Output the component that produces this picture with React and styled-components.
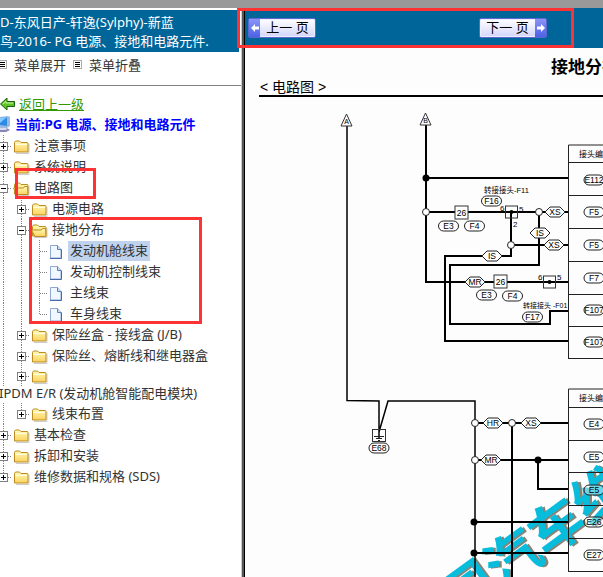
import React, { useState } from "react"
import styled, { createGlobalStyle } from "styled-components"

const GlobalStyle = createGlobalStyle`
  * {
    box-sizing: border-box;
  }
  body {
    margin: 0;
    background: #fff;
    font-family: "Noto Sans", "Noto Sans CJK SC", sans-serif;
    font-size: 13px;
    color: #333;
    overflow: hidden;
  }
`

const Page = styled.div`
  position: relative;
  height: 100vh;
  display: flex;
  flex-direction: column;
  overflow: hidden;
`

const TopStrip = styled.div`
  flex: none;
  height: 8px;
  background: #999;
`

const Frames = styled.div`
  flex: 1;
  min-height: 0;
  display: grid;
  grid-template-columns: minmax(245px, 25%) 1fr;
`

const Sidebar = styled.aside`
  min-width: 0;
  overflow: hidden;
  border-right: 1px solid #000;
  box-shadow: inset -2px 0 #555, inset -3px 0 #ccc;
  padding-right: 3px;
`

const BookTitle = styled.h1`
  margin: 2px 2px 0 0;
  padding: 3px 0 1px;
  background: #069;
  color: #fff;
  font-size: 13px;
  font-weight: 400;
  line-height: 19px;
  white-space: nowrap;
`

const MenuBar = styled.div`
  display: flex;
  gap: 7px;
  height: 34px;
  padding-bottom: 8px;
  border-bottom: 1px solid #808080;
`

const MenuButton = styled.button`
  display: flex;
  align-items: center;
  gap: 7px;
  padding: 0;
  border: 0;
  background: none;
  font: inherit;
  color: inherit;
  cursor: pointer;
  &:first-child {
    margin-left: -2px;
  }
`

const Heading = styled.div`
  display: flex;
  align-items: center;
  gap: 4px;
  height: 20px;
  white-space: nowrap;
`

const Headings = styled.div`
  padding-top: 8px;
`

const BackLink = styled.a`
  color: #390;
  line-height: 18px;
`

const CurrentLink = styled.a`
  padding-bottom: 2px;
  color: #00f;
  font-weight: 700;
  text-decoration: none;
`

const Tree = styled.div`
  margin: 0 0 0 -6px;
  padding-top: 1px;
`

const Row = styled.div`
  display: flex;
  align-items: center;
  height: ${(p) => (p.$short ? 18 : 21)}px;
  white-space: nowrap;
`

const Toggle = styled.button`
  display: flex;
  padding: 0;
  border: 0;
  background: none;
  cursor: pointer;
`

const NodeLink = styled.a`
  margin-left: 2px;
  padding: 0 2px 2px;
  line-height: 18px;
  color: #333;
  text-decoration: none;
  background: ${(p) => (p.$selected ? "#c0d2ec" : "transparent")};
`

const Overflow = styled.a`
  display: block;
  padding-left: 5px;
  line-height: 19px;
  color: #333;
  text-decoration: none;
  white-space: nowrap;
`

const Content = styled.main`
  min-width: 0;
  overflow: hidden;
  background: #fdfdfd;
`

const Pager = styled.nav`
  display: flex;
  align-items: center;
  gap: 163px;
  height: 40px;
  padding: 0 3px;
  background: #069;
`

const PageButton = styled.button`
  display: flex;
  flex-direction: ${(p) => (p.$next ? "row-reverse" : "row")};
  align-items: stretch;
  width: 68px;
  height: 20px;
  padding: 0;
  border: 1px solid #5c66cf;
  border-radius: 2px;
  background: linear-gradient(#fff, #d3d5fb);
  box-shadow: inset 0 0 0 1px #eef;
  color: #000;
  font-family: "Liberation Sans", "Noto Sans CJK SC", sans-serif;
  font-size: 13px;
  line-height: 17px;
  white-space: nowrap;
  cursor: pointer;
`

const PageArrow = styled.span`
  display: flex;
  align-items: center;
  justify-content: center;
  width: 11px;
  background: linear-gradient(#8c95f5, #4b62e8);
`

const PageText = styled.span`
  flex: 1;
  text-align: center;
`

const Sheet = styled.article`
  padding-left: 14px;
  color: #000;
  font-family: "Liberation Sans", "Noto Sans CJK SC", sans-serif;
  white-space: nowrap;
`

const SheetTitle = styled.h2`
  margin: 0;
  padding: 8px 0 0 292px;
  font-size: 17px;
  line-height: 24px;
`

const SheetSection = styled.h3`
  margin: 0;
  padding-left: 1px;
  border-bottom: 2px solid #000;
  font-size: 14px;
  font-weight: 400;
  line-height: 15px;
`

const Diagram = styled.svg`
  display: block;
  font-family: "Liberation Sans", "Noto Sans CJK SC", sans-serif;
`

const Mark = styled.div`
  position: absolute;
  left: ${(p) => p.$x}px;
  top: ${(p) => p.$y}px;
  width: ${(p) => p.$w}px;
  height: ${(p) => p.$h}px;
  border: 3px solid #f33;
  pointer-events: none;
`

const ListIcon = () => (
  <svg width="9" height="9" viewBox="0 0 9 9" shapeRendering="crispEdges">
    <rect x="0.5" y="0.5" width="8" height="8" fill="#fff" stroke="#aaa" />
    <path d="M2 2.5h5M2 4.5h5M2 6.5h5" stroke="#000" />
  </svg>
)

const BackIcon = () => (
  <svg width="15" height="14" viewBox="0 0 15 14">
    <path d="M0.5 7L7 1v3.5h7.500v5H7V13z" fill="#5fc326" stroke="#17600c" />
    <path d="M3 7l3-2.500v1.500h7" fill="none" stroke="#c9f59b" />
  </svg>
)

const ComputerIcon = () => (
  <svg width="11" height="18" viewBox="0 0 11 18">
    <path d="M0 2l8-1 2 1v9l-3 2H0z" fill="#9db9e2" />
    <path d="M0 3l7-1v9l-7-1z" fill="#2d8be6" />
    <path d="M0 3l7-1-7 6z" fill="#83cbff" />
    <path d="M0 13h7l3 2-4 2H0z" fill="#8585b8" />
    <path d="M0 13h6l2 1-3 1H0z" fill="#dadaf2" />
  </svg>
)

const dots = { stroke: "#808080", strokeDasharray: "1 1" }

const GuideLine = () => (
  <svg width="18" height="21" shapeRendering="crispEdges">
    <path d="M9.500 0v21" {...dots} />
  </svg>
)

const JoinLine = ({ last }) => (
  <svg width="18" height="21" shapeRendering="crispEdges">
    <path d={last ? "M9.500 0v11" : "M9.500 0v21"} {...dots} />
    <path d="M10 11.500h8" {...dots} />
  </svg>
)

const ToggleIcon = ({ open, last }) => (
  <svg width="18" height="21" shapeRendering="crispEdges">
    <path d={last ? "M9.500 0v11" : "M9.500 0v21"} {...dots} />
    <path d="M14 11.500h4" {...dots} />
    <rect x="5.500" y="7.500" width="8" height="8" fill="#fff" stroke="#808080" />
    <path d={open ? "M7 11.500h5" : "M7 11.500h5M9.500 9v5"} stroke="#000" />
  </svg>
)

const FolderIcon = ({ open }) => (
  <svg width="18" height="21" viewBox="0 0 18 21">
    <defs>
      <linearGradient id="folder" x1="0" y1="0" x2="0" y2="1">
        <stop offset="0" stopColor="#fffbb8" />
        <stop offset="1" stopColor="#fbd25e" />
      </linearGradient>
    </defs>
    <path d="M4 18.500h13V9" fill="none" stroke="#ccc" />
    <path d="M2.500 17V7.500l1-1.500h4l1.500 1.500h6.500l.500.500v9z" fill="url(#folder)" stroke="#bd8b20" />
    {open ? (
      <path d="M5 17.500L1.500 11h10l1-1.500h3l.500 8z" fill="url(#folder)" stroke="#bd8b20" />
    ) : (
      <path d="M3 9.500h12" stroke="#fffde0" />
    )}
  </svg>
)

const PageIcon = () => (
  <svg width="18" height="21" viewBox="0 0 18 21">
    <path d="M2.500 18V5.500h7l3.500 4V18z" fill="#f1f7ff" stroke="#91a9d4" />
    <path d="M9.500 5.500v4H13" fill="#c5daf8" stroke="#5c82c4" />
    <path d="M2 18.500h11.500V9.500" fill="none" stroke="#466aa8" />
  </svg>
)

const nodes = [
  { depth: 0, text: "注意事项" },
  { depth: 0, text: "系统说明" },
  { depth: 0, text: "电路图", open: true },
  { depth: 1, text: "电源电路" },
  { depth: 1, text: "接地分布", open: true },
  { depth: 2, text: "发动机舱线束", page: true },
  { depth: 2, text: "发动机控制线束", page: true },
  { depth: 2, text: "主线束", page: true },
  { depth: 2, text: "车身线束", page: true, last: true },
  { depth: 1, text: "保险丝盒 - 接线盒 (J/B)" },
  { depth: 1, text: "保险丝、熔断线和继电器盒" },
  { depth: 1, text: "IPDM E/R (发动机舱智能配电模块)", wraps: true },
  { depth: 1, text: "线束布置", last: true },
  { depth: 0, text: "基本检查" },
  { depth: 0, text: "拆卸和安装" },
  { depth: 0, text: "维修数据和规格 (SDS)", last: true },
]

function TreeNode({ node, selected, onSelect }) {
  const select = (e) => {
    e.preventDefault()
    onSelect(node.text)
  }
  return (
    <>
      <Row $short={node.wraps}>
        {Array.from({ length: node.depth }, (_, i) => (
          <GuideLine key={i} />
        ))}
        {node.page ? (
          <JoinLine last={node.last} />
        ) : (
          <Toggle aria-label={node.text} aria-expanded={!!node.open}>
            <ToggleIcon open={node.open} last={node.last} />
          </Toggle>
        )}
        {node.page ? <PageIcon /> : <FolderIcon open={node.open} />}
        {!node.wraps && (
          <NodeLink href="#" $selected={selected} onClick={select}>
            {node.text}
          </NodeLink>
        )}
      </Row>
      {node.wraps && (
        <Overflow href="#" onClick={select}>{node.text}</Overflow>
      )}
    </>
  )
}

const Capsule = ({ x, y, children }) => (
  <g>
    <rect x={x - 10} y={y - 5} width="20" height="10" rx="5" fill="#fff" fillOpacity="0.4" stroke="#222" />
    <text x={x} y={y + 3} fontSize="8.5" textAnchor="middle">{children}</text>
  </g>
)

const Hex = ({ x, y, children }) => (
  <g>
    <path
      d={`M${x - 10} ${y}l5-5h10l5 5l-5 5h-10z`}
      fill="#fff"
      stroke="#222"
    />
    <text x={x} y={y + 3} fontSize="8.5" textAnchor="middle">{children}</text>
  </g>
)

const Box = ({ x, y, children }) => (
  <g>
    <rect x={x - 6.5} y={y - 6.5} width="13" height="13" fill="#fff" stroke="#333" />
    <text x={x} y={y + 3} fontSize="8.5" textAnchor="middle">{children}</text>
  </g>
)

const Joint = ({ x, y }) => (
  <g>
    <rect x={x - 6} y={y - 6} width="12" height="12" fill="none" stroke="#333" />
    <circle cx={x} cy={y} r="2" />
  </g>
)

const Arrow = ({ x, y, children }) => (
  <g>
    <path d={`M${x} ${y}l5.500 12h-11z`} fill="#fff" stroke="#333" />
    <text x={x} y={y + 10} fontSize="7" textAnchor="middle">{children}</text>
  </g>
)

const Table = ({ y, rows, codes }) => (
  <g>
    <path
      d={`M700 ${y}H568.500V${rows[rows.length - 1]}` + rows.map((r) => `M568 ${r}h132`).join("")}
      fill="none"
      stroke="#222"
    />
    <text x="579" y={y + 12} fontSize="8">接头编码</text>
    {codes.map(([code, cy]) => (
      <Capsule key={cy} x={594} y={cy}>{code}</Capsule>
    ))}
  </g>
)

const dotPoints = [[426, 178], [538, 460], [474, 522], [474, 553]]
const ringPoints = [[426, 212], [539, 212], [511, 245], [475, 423], [512, 423], [475, 460]]

const Wiring = () => (
  <Diagram width="441" height="500" viewBox="259 97 441 500" role="img" aria-label="接地分布电路图">
    <g transform="translate(556 526) rotate(-36)" fontSize="54" fontWeight="700" textAnchor="middle">
      <text x="2" y="22" fill="#8a8378">国汽车维修</text>
      <text x="0" y="20" fill="#08bcdc">国汽车维修</text>
    </g>
    <g fill="none" stroke="#000" strokeWidth="2">
      <path d="M347 126V400.500L379 401V438M379 432L388 401H475V600" strokeWidth="1.500" />
      <path d="M426 125V282H568M426 178H568M426 212H568" />
      <path d="M511 212V256H445V341H568M511 245H568" />
      <path d="M539 212V265H450V324H550V311H568" />
      <path d="M475 423H568M475 460H568M538 460V489H568M512 423V600" />
      <path d="M474 522H568M474 553H568" />
    </g>
    {dotPoints.map(([x, y]) => <circle key={`${x}-${y}`} cx={x} cy={y} r="3.500" />)}
    {ringPoints.map(([x, y]) => (
      <circle key={`${x}-${y}`} cx={x} cy={y} r="3.500" fill="#fff" stroke="#222" />
    ))}

    <Arrow x={346.5} y={114}>A</Arrow>
    <Arrow x={425.5} y={113}>B</Arrow>

    <text x="484" y="193" fontSize="7.500">转接接头-F11</text>
    <Capsule x={491.5} y={201}>F16</Capsule>
    <Box x={461.5} y={212.5}>26</Box>
    <Capsule x={448.5} y={226}>E3</Capsule>
    <Capsule x={474.5} y={226}>F4</Capsule>
    <Joint x={511.5} y={212} />
    <g fontSize="8">
      <text x="500" y="211">6</text>
      <text x="519" y="212">5</text>
      <text x="513" y="227">2</text>
      <text x="538" y="280">6</text>
      <text x="557" y="280">5</text>
    </g>
    <Hex x={555} y={212}>XS</Hex>
    <Hex x={540} y={233}>IS</Hex>
    <Hex x={554} y={245}>XS</Hex>
    <Hex x={492} y={256}>IS</Hex>

    <Hex x={475} y={282}>MR</Hex>
    <Box x={500.5} y={281.5}>26</Box>
    <Joint x={549.5} y={282} />
    <Capsule x={486.5} y={295}>E3</Capsule>
    <Capsule x={512.5} y={296}>F4</Capsule>
    <text x="523" y="308" fontSize="7">转接接头 -F01</text>
    <Capsule x={532.5} y={317}>F17</Capsule>

    <Hex x={493} y={423}>HR</Hex>
    <Hex x={531} y={423}>XS</Hex>
    <Hex x={491} y={460}>MR</Hex>

    <rect x="372.500" y="429.500" width="13" height="12" fill="none" stroke="#333" />
    <path d="M374 436.500h10M376 438.500h6M378 440.500h2" stroke="#222" />
    <Capsule x={379} y={448}>E68</Capsule>

    <Table
      y={145}
      rows={[162.5, 195.5, 228.5, 261.5, 294.5, 326.5, 358.5]}
      codes={[["E112", 180], ["F5", 212], ["F5", 245], ["F7", 278], ["F107", 310], ["F107", 342]]}
    />
    <Table
      y={389}
      rows={[407.5, 440.5, 472.5, 505.5, 538.5, 571.5]}
      codes={[["E4", 424], ["E5", 457], ["E5", 490], ["E26", 522], ["E27", 555]]}
    />
  </Diagram>
)

const marks = [
  { x: 237, y: 8, w: 337, h: 40 },
  { x: 15, y: 168, w: 81, h: 31 },
  { x: 29, y: 217, w: 173, h: 107 },
]

export default function App() {
  const [current, setCurrent] = useState("发动机舱线束")

  return (
    <Page>
      <GlobalStyle />
      <TopStrip />
      <Frames>
        <Sidebar>
          <BookTitle>
            D-东风日产-轩逸(Sylphy)-新蓝
            <br />
            鸟-2016- PG 电源、接地和电路元件.
          </BookTitle>
          <MenuBar>
            <MenuButton><ListIcon />菜单展开</MenuButton>
            <MenuButton><ListIcon />菜单折叠</MenuButton>
          </MenuBar>
          <Headings>
            <Heading>
              <BackIcon />
              <BackLink href="#">返回上一级</BackLink>
            </Heading>
            <Heading>
              <ComputerIcon />
              <CurrentLink href="#">当前:PG 电源、接地和电路元件</CurrentLink>
            </Heading>
          </Headings>
          <Tree>
            {nodes.map((node) => (
              <TreeNode
                key={node.text}
                node={node}
                selected={node.text === current}
                onSelect={setCurrent}
              />
            ))}
          </Tree>
        </Sidebar>
        <Content>
          <Pager>
            <PageButton>
              <PageArrow>
                <svg width="8" height="8" viewBox="0 0 8 8">
                  <path d="M0 4l4-4v2.500h4v3H4V8z" fill="#fff" />
                </svg>
              </PageArrow>
              <PageText>上一 页</PageText>
            </PageButton>
            <PageButton $next>
              <PageArrow>
                <svg width="8" height="8" viewBox="0 0 8 8">
                  <path d="M8 4L4 0v2.500H0v3h4V8z" fill="#fff" />
                </svg>
              </PageArrow>
              <PageText>下一 页</PageText>
            </PageButton>
          </Pager>
          <Sheet>
            <SheetTitle>接地分布</SheetTitle>
            <SheetSection>&lt; 电路图 &gt;</SheetSection>
            <Wiring />
          </Sheet>
        </Content>
      </Frames>
      {marks.map((m) => (
        <Mark key={m.y} $x={m.x} $y={m.y} $w={m.w} $h={m.h} />
      ))}
    </Page>
  )
}
